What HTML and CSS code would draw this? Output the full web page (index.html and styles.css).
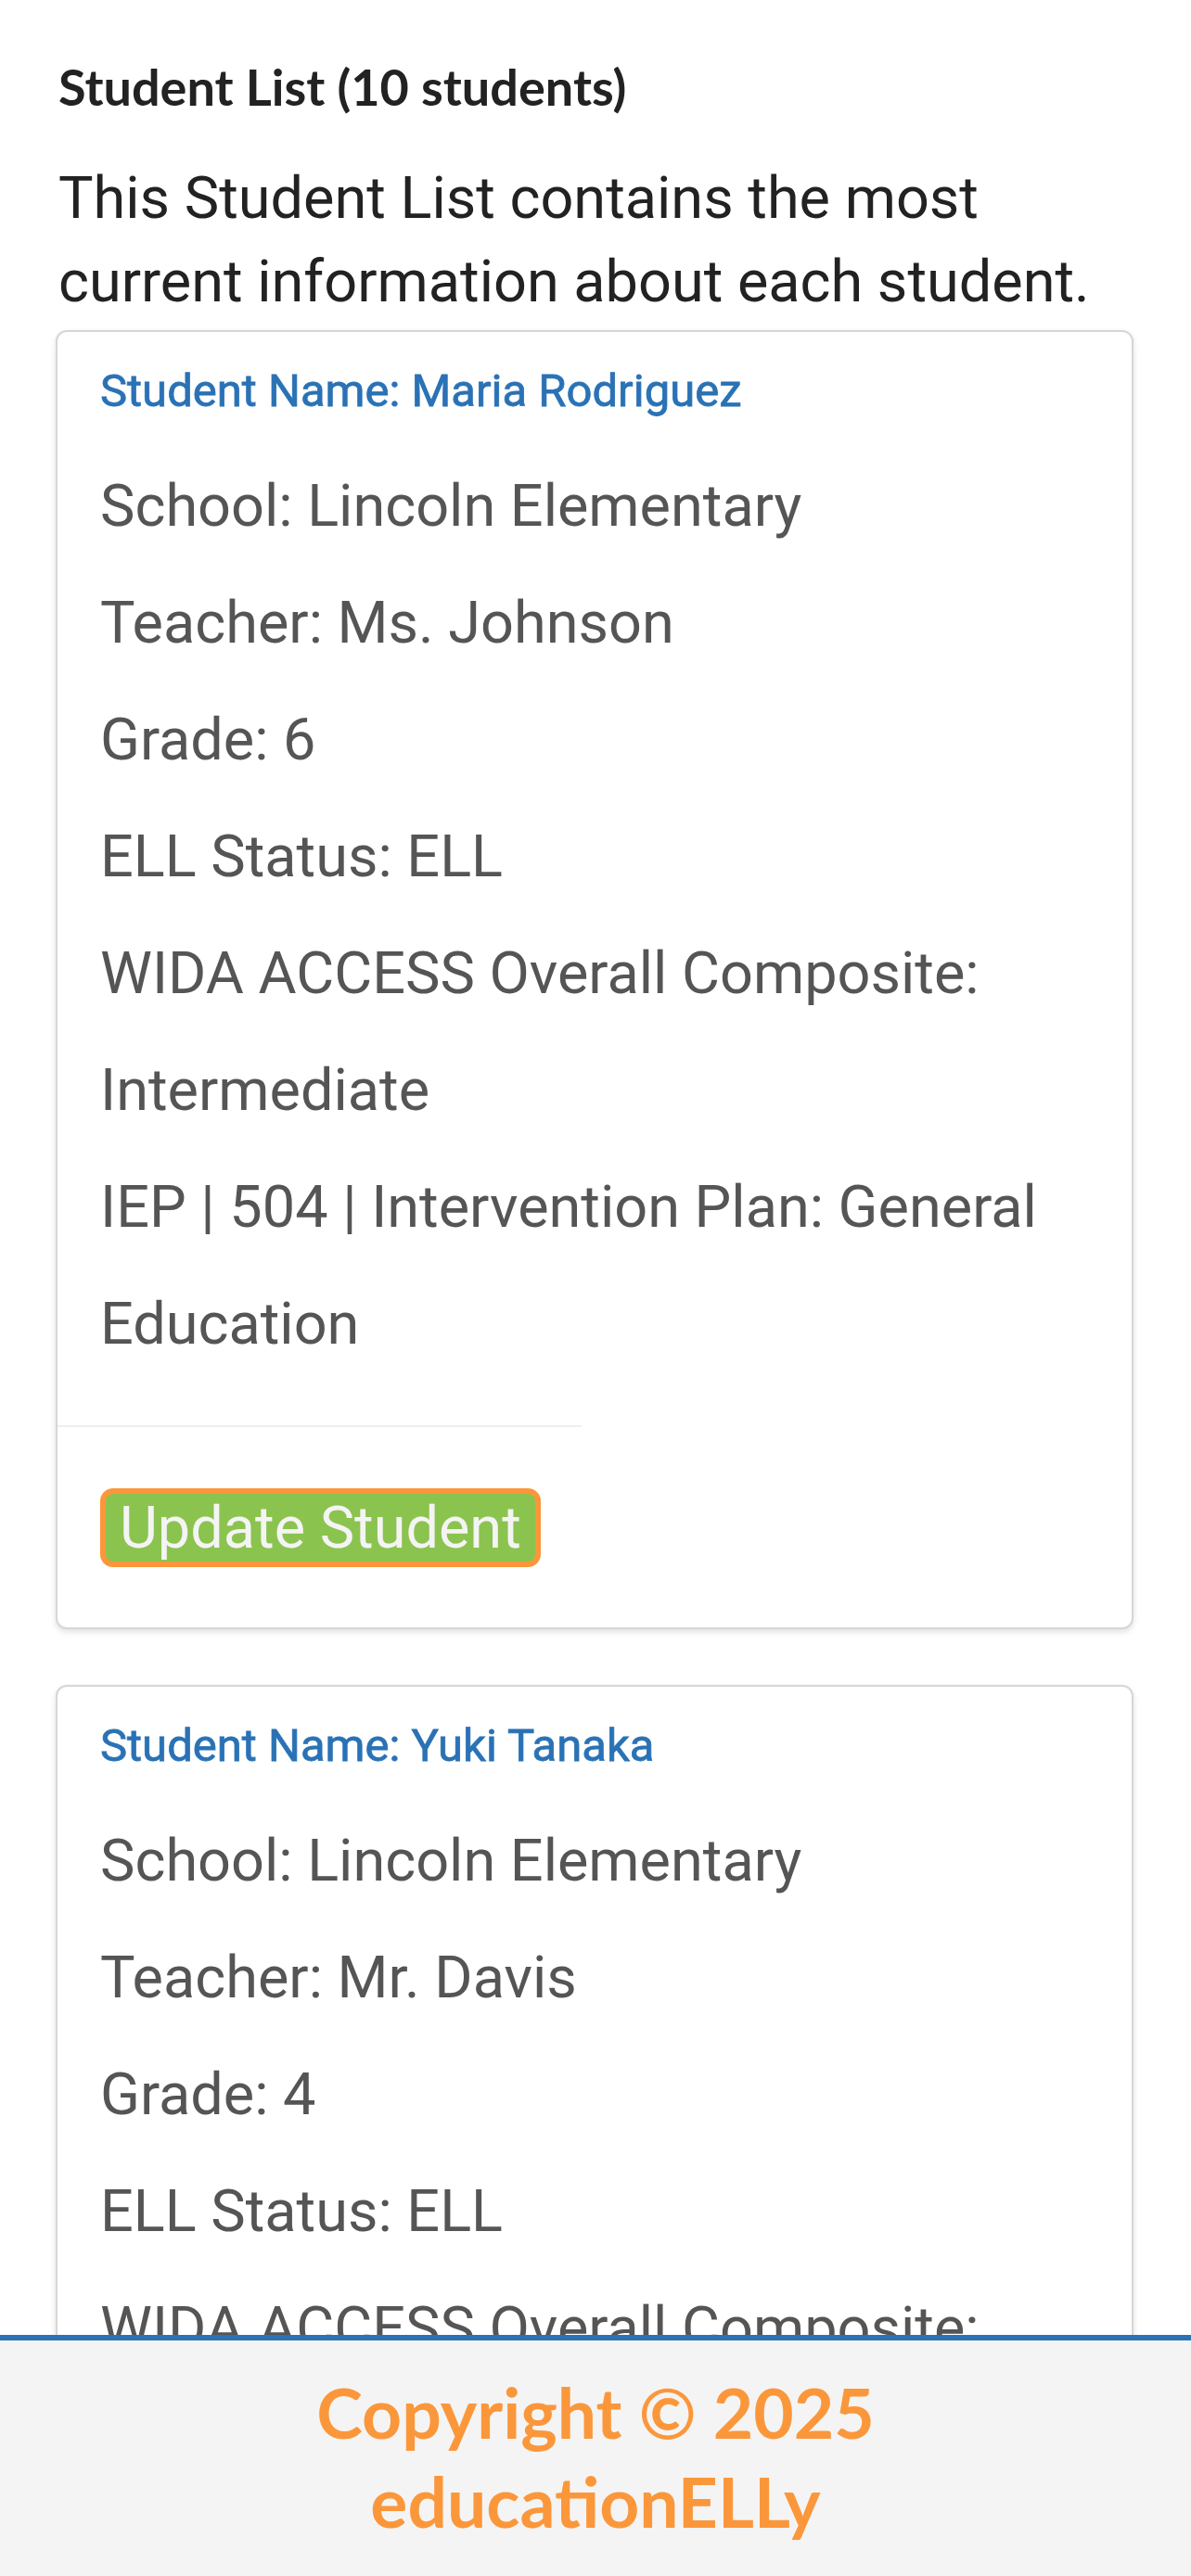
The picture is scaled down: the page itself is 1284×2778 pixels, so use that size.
FILE: index.html
```html
<!DOCTYPE html>
<html lang="en">
<head>
<meta charset="utf-8">
<title>Student List</title>
<link rel="stylesheet" href="styles.css">
</head>
<body>
<main class="page">
  <h4 class="list-title">Student List (10 students)</h4>
  <p class="lead">This Student List contains the most current information about each student.</p>

  <section class="card">
    <div class="card-body">
      <h5 class="student-name">Student Name: Maria Rodriguez</h5>
      <p class="field">School: Lincoln Elementary</p>
      <p class="field">Teacher: Ms. Johnson</p>
      <p class="field">Grade: 6</p>
      <p class="field">ELL Status: ELL</p>
      <p class="field">WIDA ACCESS Overall Composite: Intermediate</p>
      <p class="field">IEP | 504 | Intervention Plan: General Education</p>
    </div>
    <hr class="divider">
    <div class="card-actions">
      <button class="btn-update" type="button">Update Student</button>
    </div>
  </section>

  <section class="card">
    <div class="card-body">
      <h5 class="student-name">Student Name: Yuki Tanaka</h5>
      <p class="field">School: Lincoln Elementary</p>
      <p class="field">Teacher: Mr. Davis</p>
      <p class="field">Grade: 4</p>
      <p class="field">ELL Status: ELL</p>
      <p class="field">WIDA ACCESS Overall Composite: Emerging</p>
      <p class="field">IEP | 504 | Intervention Plan: General Education</p>
    </div>
    <hr class="divider">
    <div class="card-actions">
      <button class="btn-update" type="button">Update Student</button>
    </div>
  </section>
</main>

<footer class="site-footer">
  <p class="copyright">Copyright © 2025<br>educationELLy</p>
</footer>
</body>
</html>
```
FILE: styles.css
```css
html, body {
  margin: 0;
  padding: 0;
  background: #ffffff;
}

body {
  font-family: Roboto, "Noto Sans", sans-serif;
  color: #222222;
}

.page {
  padding: 64px 62px 320px 60px;
}

.list-title {
  margin: 0;
  padding-left: 3px;
  font-family: Lato, "Liberation Sans", sans-serif;
  font-weight: 700;
  font-size: 54px;
  line-height: 1.1;
  color: #222222;
}

.lead {
  margin: 46px 0 7px;
  padding-left: 3px;
  font-size: 63px;
  line-height: 90px;
  color: #222222;
}

.card {
  background: #ffffff;
  border: 2px solid #d6d6d6;
  border-radius: 12px;
  box-shadow: 0 3px 6px rgba(0, 0, 0, 0.12);
  margin-bottom: 60px;
}

.card-body {
  padding: 35px 46px 0;
}

.student-name {
  margin: 0 0 32px;
  font-family: Roboto, "Noto Sans", sans-serif;
  font-size: 49px;
  font-weight: 400;
  line-height: 58px;
  color: #2a72b5;
  -webkit-text-stroke: 0.8px #2a72b5;
}

.field {
  margin: 0;
  font-size: 63px;
  line-height: 126px;
  color: #555555;
}

.divider {
  width: 565px;
  margin: 46px 0 0;
  border: 0;
  border-top: 2px solid #efefef;
  height: 0;
}

.card-actions {
  padding: 66px 46px 65px;
}

.btn-update {
  display: inline-block;
  margin: 0;
  padding: 0 15px;
  font-family: Roboto, "Noto Sans", sans-serif;
  font-size: 63px;
  line-height: 73px;
  color: #f4f4f4;
  background: #8bc34f;
  border: 6px solid #fb963a;
  border-radius: 14px;
  cursor: pointer;
}

.site-footer {
  position: fixed;
  left: 0;
  right: 0;
  bottom: 0;
  background: #f4f4f4;
  border-top: 6px solid #2a72b5;
  padding: 29px 0 33px;
}

.copyright {
  margin: 0;
  text-align: center;
  font-family: Lato, "Liberation Sans", sans-serif;
  font-weight: 700;
  font-size: 75px;
  line-height: 96px;
  color: #fb973b;
}
```
